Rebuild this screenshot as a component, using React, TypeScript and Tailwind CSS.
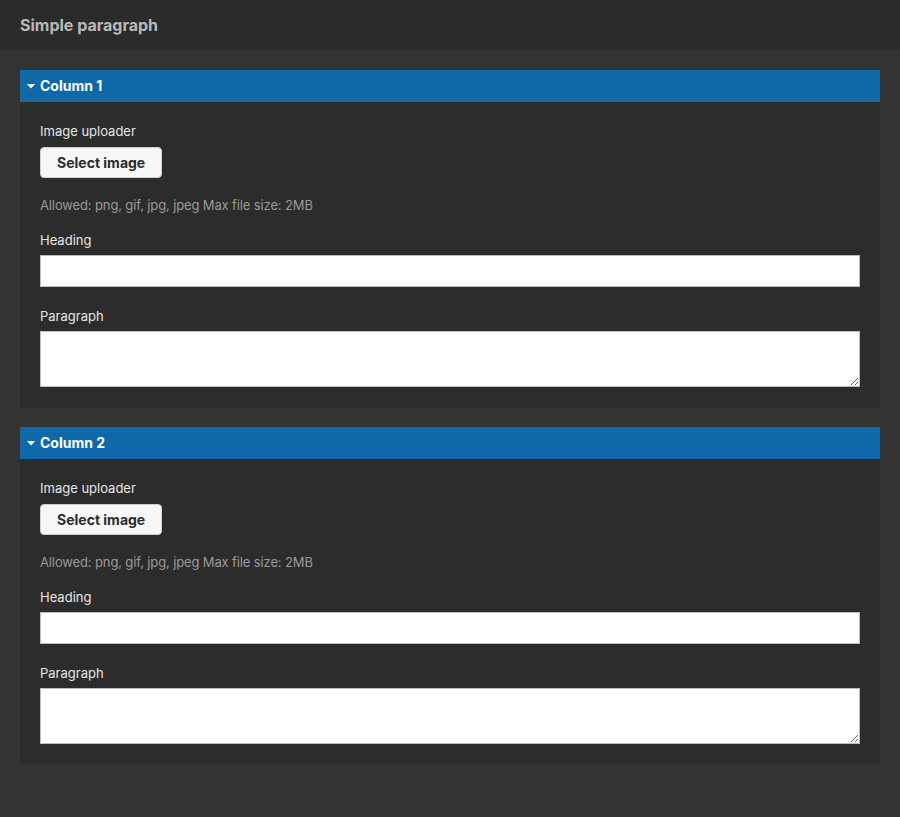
import React from 'react';

const font = { fontFamily: 'Inter, "Noto Sans", sans-serif' };

function ColumnPanel({ title }: { title: string }) {
  return (
    <section className="bg-[#2c2c2c]">
      <div className="flex h-8 items-center gap-[4px] bg-[#0f68a8] px-[6px] text-white">
        <svg width="10" height="10" viewBox="0 0 10 10" className="shrink-0">
          <path d="M1 3 L9 3 L5 7.5 Z" fill="#fff" />
        </svg>
        <span className="text-[14px] font-bold leading-none">{title}</span>
      </div>

      <div className="flex flex-col p-5">
        <label className="text-[13px] leading-[18px] text-[#e6e6e6]">Image uploader</label>
        <div className="mt-[7px]">
          <button className="h-[31px] rounded-[4px] border border-[#cfcfcf] bg-[#f7f7f7] px-4 text-[14px] font-bold text-[#2b2b2b]">
            Select image
          </button>
        </div>
        <p className="mt-[18px] text-[13px] leading-[18px] tracking-[-0.13px] text-[#9a9a9a]">
          Allowed: png, gif, jpg, jpeg Max file size: 2MB
        </p>

        <label className="mt-[17px] text-[13px] leading-[18px] text-[#e6e6e6]">Heading</label>
        <input
          type="text"
          className="mt-[6px] h-8 w-full border border-[#bdbdbd] bg-white px-2 text-[14px] text-black outline-none"
        />

        <label className="mt-5 text-[13px] leading-[18px] text-[#e6e6e6]">Paragraph</label>
        <textarea className="mt-[6px] block h-[56px] w-full resize-y border border-[#bdbdbd] bg-white px-2 py-1 text-[14px] text-black outline-none" />
      </div>
    </section>
  );
}

export default function App() {
  return (
    <div className="min-h-[817px] bg-[#333333]" style={font}>
      <header className="flex h-[50px] items-center bg-[#2b2b2b] px-5">
        <h1 className="text-[16px] font-bold text-[#b9b9b9]">Simple paragraph</h1>
      </header>
      <main className="flex flex-col gap-5 px-5 pt-5">
        <ColumnPanel title="Column 1" />
        <ColumnPanel title="Column 2" />
      </main>
    </div>
  );
}
